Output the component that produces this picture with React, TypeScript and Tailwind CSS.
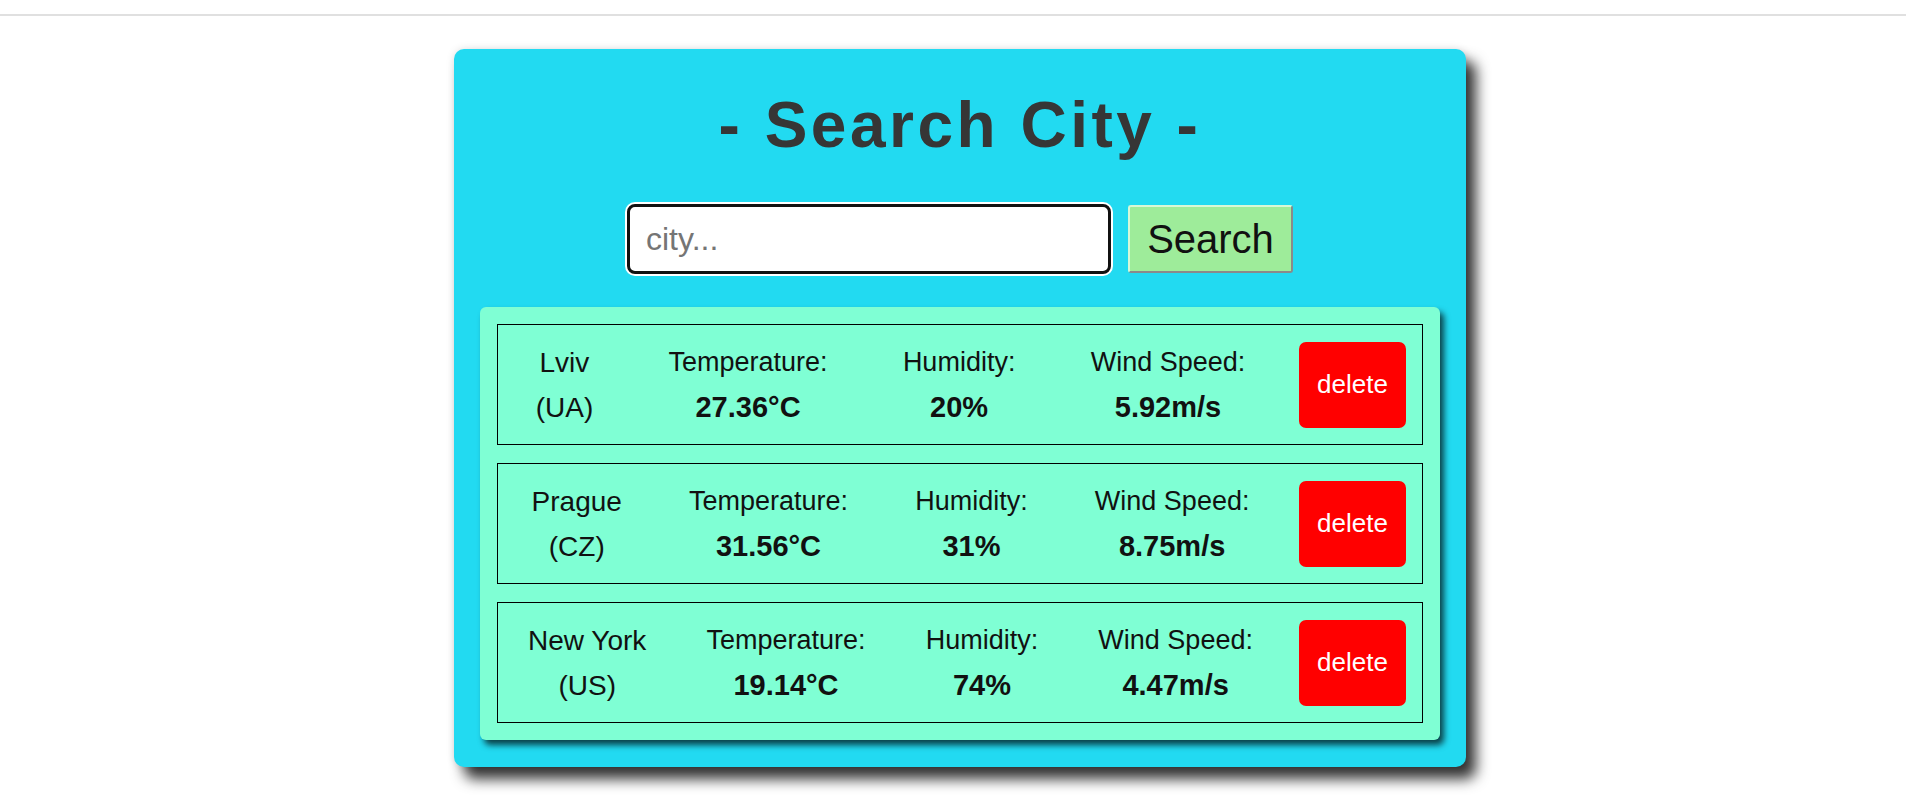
import * as React from 'react';

interface CityWeather {
    id: number;
    name: string;
    country: string;
    temp: string;
    humidity: string;
    wind: string;
}

const initialCities: CityWeather[] = [
    { id: 1, name: 'Lviv', country: 'UA', temp: '27.36°C', humidity: '20%', wind: '5.92m/s' },
    { id: 2, name: 'Prague', country: 'CZ', temp: '31.56°C', humidity: '31%', wind: '8.75m/s' },
    { id: 3, name: 'New York', country: 'US', temp: '19.14°C', humidity: '74%', wind: '4.47m/s' },
];

const Stat: React.FC<{ label: string; value: string }> = ({ label, value }) => (
    <div className="flex flex-col items-center leading-[45px] whitespace-nowrap">
        <span className="text-[27px]">{label}</span>
        <span className="text-[29px] font-bold">{value}</span>
    </div>
);

const CityRow: React.FC<{ city: CityWeather; onDelete: (id: number) => void }> = ({ city, onDelete }) => (
    <div className="flex items-center h-[121px] border border-black">
        <div className="flex flex-1 justify-around items-center">
            <div className="flex flex-col items-center text-[28px] leading-[45px] whitespace-nowrap">
                <span>{city.name}</span>
                <span>({city.country})</span>
            </div>
            <Stat label="Temperature:" value={city.temp} />
            <Stat label="Humidity:" value={city.humidity} />
            <Stat label="Wind Speed:" value={city.wind} />
        </div>
        <button
            onClick={() => onDelete(city.id)}
            className="mx-4 w-[107px] h-[86px] bg-[#ff0000] text-white text-[26px] rounded-[7px] cursor-pointer"
        >
            delete
        </button>
    </div>
);

const App: React.FC = () => {
    const [query, setQuery] = React.useState('');
    const [cities, setCities] = React.useState<CityWeather[]>(initialCities);

    const handleDelete = (id: number) => {
        setCities(cities.filter(c => c.id !== id));
    };

    return (
        <div className="min-h-screen bg-white text-[#111] font-['Liberation_Sans',Arial,sans-serif]">
            <div className="pt-[14px]">
                <div className="h-[2px] bg-[#e0e0e0]"></div>
            </div>
            <div className="flex justify-center pl-[14px] mt-[33px] pb-10">
                <div className="w-[1012px] bg-[#22daf1] rounded-[10px] px-[26px] pt-[26px] pb-[27px] shadow-[10px_12px_14px_rgba(0,0,0,0.8),0_0_8px_rgba(0,0,0,0.12)]">
                    <h1 className="mt-[13px] text-center text-[64px] leading-[74px] font-bold tracking-[3.5px] text-[#363636]">
                        - Search City -
                    </h1>
                    <form
                        onSubmit={e => e.preventDefault()}
                        className="mt-[42px] flex justify-center items-center gap-[17px]"
                    >
                        <input
                            type="text"
                            value={query}
                            onChange={e => setQuery(e.target.value)}
                            placeholder="city..."
                            className="w-[484px] h-[70px] bg-white border-[3px] border-[#111] rounded-[8px] pl-4 text-[32px] placeholder:text-[#757575] shadow-[0_0_0_2px_#ffffff] outline-none"
                        />
                        <button
                            type="submit"
                            className="w-[165px] h-[68px] bg-[#9eec9a] text-[40px] text-[#111] rounded-[3px] border-2 border-t-[#d8f8d6] border-l-[#d8f8d6] border-r-[#8a8a8a] border-b-[#8a8a8a] cursor-pointer"
                        >
                            Search
                        </button>
                    </form>
                    <div className="mt-[33px] bg-[#7fffd4] rounded-[6px] p-[17px] flex flex-col gap-[18px] shadow-[4px_5px_6px_rgba(0,0,0,0.7)]">
                        {cities.map(city => (
                            <CityRow key={city.id} city={city} onDelete={handleDelete} />
                        ))}
                    </div>
                </div>
            </div>
        </div>
    );
};

export default App;
